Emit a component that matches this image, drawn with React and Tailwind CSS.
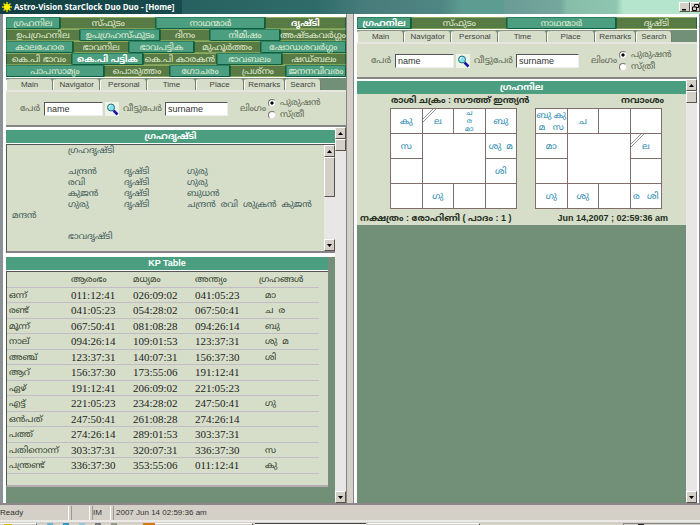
import React from 'react'

const menuRows = [
    {
        cols: 'grid-cols-[54fr_96fr_108fr_81fr]',
        items: [['ഗ്രഹനില', 1], ['സ്ഫുടം', 0], ['നാഥന്മാർ', 1], ['ദൃഷ്ടി', 0, true]],
    },
    {
        cols: 'grid-cols-[74fr_80fr_50fr_70fr_66fr]',
        items: [['ഉപഗ്രഹനില', 0], ['ഉപഗ്രഹസ്ഫുടം', 1], ['ദിനം', 0], ['നിമിഷം', 1], ['അഷ്ടകവർഗ്ഗം', 0]],
    },
    {
        cols: 'grid-cols-[67fr_56fr_64fr_67fr_85fr]',
        items: [['കാലഹോര', 1], ['ഭാവനില', 0], ['ഭാവപട്ടിക', 1], ['മുഹൂർത്തം', 0], ['ഷോഡശവർഗ്ഗം', 1]],
    },
    {
        cols: 'grid-cols-[66fr_71fr_74fr_65fr_64fr]',
        items: [['കെ.പി ഭാവം', 0], ['കെ.പി പട്ടിക', 1, true], ['കെ.പി കാരകൻ', 0], ['ഭാവബലം', 1], ['ഷഡ്ബലം', 0]],
    },
    {
        cols: 'grid-cols-[98fr_66fr_60fr_56fr_60fr]',
        items: [['പാപസാമ്യം', 1], ['പൊരുത്തം', 0], ['ഗോചരം', 1], ['പ്രശ്നം', 0], ['ജനനവിവരം', 1]],
    },
]

const rightMenuRows = [
    {
        cols: 'grid-cols-[54fr_96fr_108fr_81fr]',
        items: [['ഗ്രഹനില', 1, true], ['സ്ഫുടം', 0], ['നാഥന്മാർ', 1], ['ദൃഷ്ടി', 0]],
    },
]

const tabs = ['Main', 'Navigator', 'Personal', 'Time', 'Place', 'Remarks', 'Search']

const aspects = [
    ['ചന്ദ്രൻ', 'ദൃഷ്ടി', 'ഗുരു'],
    ['രവി', 'ദൃഷ്ടി', 'ഗുരു'],
    ['കുജൻ', 'ദൃഷ്ടി', 'ബുധൻ'],
    ['ഗുരു', 'ദൃഷ്ടി', 'ചന്ദ്രൻ  രവി  ശുക്രൻ  കുജൻ'],
]

const kpRows = [
    ['ഒന്ന്', '011:12:41', '026:09:02', '041:05:23', 'മാ'],
    ['രണ്ട്', '041:05:23', '054:28:02', '067:50:41', 'ച  ര'],
    ['മൂന്ന്', '067:50:41', '081:08:28', '094:26:14', 'ബു'],
    ['നാല്', '094:26:14', '109:01:53', '123:37:31', 'ശു  മ'],
    ['അഞ്ച്', '123:37:31', '140:07:31', '156:37:30', 'ശി'],
    ['ആറ്', '156:37:30', '173:55:06', '191:12:41', ''],
    ['ഏഴ്', '191:12:41', '206:09:02', '221:05:23', ''],
    ['എട്ട്', '221:05:23', '234:28:02', '247:50:41', 'ഗു'],
    ['ഒൻപത്', '247:50:41', '261:08:28', '274:26:14', ''],
    ['പത്ത്', '274:26:14', '289:01:53', '303:37:31', ''],
    ['പതിനൊന്ന്', '303:37:31', '320:07:31', '336:37:30', 'സ'],
    ['പന്ത്രണ്ട്', '336:37:30', '353:55:06', '011:12:41', 'കു'],
]

// houses in grid order, the centre 2x2 is left open. A leading slash marks the lagna.
const rasi = ['കു', '/ല', 'ച\nര\nമാ', 'ബു', 'സ', 'ശു  മ', '', 'ശി', '', 'ഗു', '', '']
const navamsa = ['ബു കു\nമ   സ', 'ച', '', '', 'മാ', '/ല', '', '', 'ഗു', 'ശു', '', 'ര   ശി']

const raised = 'border border-t-white border-l-white border-r-[#55524c] border-b-[#55524c] bg-[#d4d0c8]'

const Arrow = ({ down }) => (
    <svg viewBox="0 0 5 3" className="w-[5px] h-[3px]" fill="#000">
        <path d={down ? 'M0 0h5L2.5 3z' : 'M0 3h5L2.5 0z'} />
    </svg>
)

const ScrollBar = ({ thumb }) => (
    <div className="w-[11px] shrink-0 flex flex-col bg-[#e9e7e6]">
        <button aria-label="Scroll up" className={`h-3 shrink-0 flex items-center justify-center ${raised}`}><Arrow /></button>
        <div className={`${thumb} ${raised}`} />
        <button aria-label="Scroll down" className={`h-3 mt-auto shrink-0 flex items-center justify-center ${raised}`}><Arrow down /></button>
    </div>
)

const Menu = ({ rows }) => (
    <nav className="flex flex-col">
        {rows.map((row, r) => (
            <div key={r} className={`grid h-3 ${row.cols}`}>
                {row.items.map(([label, teal, active]) => (
                    <button
                        key={label}
                        className={`min-w-0 flex items-center justify-center whitespace-nowrap border text-[9px] leading-none ${teal ? 'bg-[#4b9f80] border-t-[#2a8060] border-l-[#2a8060] border-r-[#0e5f3e] border-b-[#0e5f3e]' : 'bg-[#587a44] border-t-[#8cab62] border-l-[#1c6038] border-r-[#1c6038] border-b-[#7fa055]'} ${active ? 'font-bold text-white' : 'text-[#e3eed6]'}`}
                    >
                        {label}
                    </button>
                ))}
            </div>
        ))}
    </nav>
)

const Tabs = () => (
    <div className="grid grid-cols-[47fr_47fr_47fr_48fr_48fr_41fr_36fr_25fr] h-3 mt-px bg-[#728f78]">
        {tabs.map((tab) => (
            <button key={tab} className="min-w-0 rounded-t-sm border-t border-l border-r border-t-[#8d9686] border-l-white border-r-[#77806f] bg-[#d6dec9] text-[8px] leading-[10px] text-[#444]">
                {tab}
            </button>
        ))}
    </div>
)

const SearchIcon = () => (
    <svg viewBox="0 0 14 14" className="w-3.5 h-3.5">
        <path d="M8.5 8.5l4 4" stroke="#1414a0" strokeWidth="2.5" />
        <circle cx="6" cy="5.5" r="3.5" fill="#7fe3ee" stroke="#28707c" strokeWidth="1" />
        <path d="M4 5.5a2 2 0 0 1 2-2" stroke="#fff" fill="none" />
    </svg>
)

const PersonForm = ({ side }) => {
    const field = 'h-3.5 min-w-0 bg-white border border-t-[#555] border-l-[#555] border-r-[#eee] border-b-[#eee] pl-0.5 text-[9px] text-[#333]'
    return (
        <form className="h-[37px] flex items-center pl-3.5 border-t-2 border-t-[#e6e6de] border-b-2 border-b-[#858585] bg-[#d6dec9] text-[9px] text-[#5c6653] whitespace-nowrap">
            <label htmlFor={`${side}-name`} className="w-6">പേർ</label>
            <input id={`${side}-name`} defaultValue="name" className={`${field} w-[59px]`} />
            <button type="button" aria-label="Search" className="ml-0.5 w-3.5 h-3.5 bg-[#eef3ea]"><SearchIcon /></button>
            <label htmlFor={`${side}-surname`} className="ml-1 w-[42px]">വീട്ടുപേർ</label>
            <input id={`${side}-surname`} defaultValue="surname" className={`${field} w-[63px]`} />
            <fieldset className="ml-3 flex items-center">
                <span className="w-[28px]">ലിംഗം</span>
                <div className="flex flex-col gap-px">
                    {['പുരുഷൻ', 'സ്ത്രീ'].map((label, i) => (
                        <label key={label} className="h-[11px] flex items-center gap-1">
                            <input
                                type="radio"
                                name={`${side}-gender`}
                                defaultChecked={i === 0}
                                className="appearance-none w-2 h-2 rounded-full border border-[#777] border-b-[#ddd] border-r-[#ddd] bg-white checked:bg-[radial-gradient(#000_35%,#fff_40%)]"
                            />
                            {label}
                        </label>
                    ))}
                </div>
            </fieldset>
        </form>
    )
}

const PanelTitle = ({ children }) => (
    <h2 className="h-[13px] flex items-center justify-center bg-[#4b9f80] text-white text-[9px] leading-none font-bold">{children}</h2>
)

const House = ({ value }) => {
    const lagna = value.startsWith('/')
    const text = lagna ? value.slice(1) : value
    const lines = text.split('\n').length
    return (
        <div className={`relative min-w-0 bg-white flex items-center justify-center text-center whitespace-pre text-[#2589ae] ${lines === 3 ? 'text-[7px] leading-[8px]' : 'text-[9px] leading-3'}`}>
            {lagna && (
                <svg viewBox="0 0 14 14" className="absolute top-0 left-0 w-3.5 h-3.5" stroke="#777" strokeWidth="0.8">
                    <path d="M0 10L10 0M0 13L13 0" />
                </svg>
            )}
            {text}
        </div>
    )
}

const Chart = ({ houses }) => (
    <div className="w-[127px] h-[101px] grid grid-cols-4 grid-rows-4 gap-px p-px bg-[#806d6c]">
        {houses.slice(0, 5).map((v, i) => <House key={i} value={v} />)}
        <div className="col-span-2 row-span-2 bg-white" />
        {houses.slice(5).map((v, i) => <House key={i} value={v} />)}
    </div>
)

const App = () => {
    return (
        <div className="min-h-screen flex flex-col bg-[#d4d0c8] font-['Liberation_Sans','Noto_Sans_Malayalam',sans-serif]">
            <header className="h-[14px] flex items-center gap-0.5 pl-0.5 bg-[linear-gradient(90deg,#123f42_0%,#174b4d_26%,#27605f_26%,#2f6c69_45%,#477c7b_52%,#4f8582_63%,#5d9c90_66%,#5d9c90_72%,#6a9c96_72%,#75a79c_80%,#85bda8_81%,#8fc6b1_88%,#b5e6cd_89%)]">
                <svg viewBox="0 0 10 10" className="w-2.5 h-2.5">
                    <path d="M5 0v10M0 5h10M1.5 1.5l7 7M8.5 1.5l-7 7" stroke="#e8d800" strokeWidth="1.4" />
                    <circle cx="5" cy="5" r="3" fill="#fff200" />
                </svg>
                <h1 className="text-white font-bold text-[8px] leading-none font-['Open_Sans',sans-serif]">Astro-Vision StarClock Duo Duo - [Home]</h1>
                <button aria-label="Minimize" className={`ml-auto w-[11px] h-2.5 flex items-center justify-center ${raised}`}>
                    <svg viewBox="0 0 7 7" className="w-[7px] h-[7px]"><path d="M1 5h4v1.5H1z" /></svg>
                </button>
                <button aria-label="Restore" className={`-ml-0.5 w-2.5 h-2.5 flex items-center justify-center ${raised}`}>
                    <svg viewBox="0 0 7 7" className="w-[7px] h-[7px]" fill="none" stroke="#000">
                        <path d="M2.5 2.5v-2h4v3h-2M.5 3h4v3.5h-4z" />
                    </svg>
                </button>
            </header>

            <main className="flex-1 grid grid-cols-2 gap-1.5">
                <section className="min-w-0 flex flex-col border-l-3 border-l-[#8a9296] pl-[3px] pt-[3px] bg-white border-r border-r-[#85858a]">
                    <Menu rows={menuRows} />
                    <Tabs />
                    <PersonForm side="left" />
                    <div className="flex-1 flex">
                        <div className="flex-1 min-w-0 flex flex-col bg-[#728f78]">
                            <div className="bg-white pt-[3px] pb-1">
                                <PanelTitle>ഗ്രഹദൃഷ്ടി</PanelTitle>
                                <div className="mt-px h-[109px] flex border-t border-l border-[#555] border-b-2 border-b-[#8a828a] bg-[#d6dec9]">
                                    <div className="flex-1 pl-[5px] text-[9px] leading-[11px] text-[#3d5a5a] whitespace-pre">
                                        <p className="pl-14 mb-2.5">ഗ്രഹദൃഷ്ടി</p>
                                        {aspects.map((row) => (
                                            <div key={row[0]} className="grid grid-cols-[56px_63px_1fr] pl-14">
                                                {row.map((cell, i) => <span key={i}>{cell}</span>)}
                                            </div>
                                        ))}
                                        <p>മന്ദൻ</p>
                                        <p className="pl-14 mt-2.5">ഭാവദൃഷ്ടി</p>
                                    </div>
                                    <ScrollBar thumb="h-10" />
                                </div>
                            </div>
                            <div className="mr-1.5 border-r border-r-[#8a828a] bg-white">
                                <PanelTitle>KP Table</PanelTitle>
                                <div className="mt-px h-[216px] pr-[9px] border-t border-l border-[#555] border-b-2 border-b-[#b5aab2] bg-[#d6dec9]">
                                    <table className="w-full table-fixed border-collapse text-left text-[9px] text-[#33402e]">
                                        <thead>
                                            <tr className="h-[15px] border-b border-[#c3bcc6]">
                                                <td className="w-[64px]"></td>
                                                <th className="w-[62px] font-normal">ആരംഭം</th>
                                                <th className="w-[62px] font-normal">മധ്യമം</th>
                                                <th className="w-[64px] font-normal">അന്ത്യം</th>
                                                <th className="font-normal">ഗ്രഹങ്ങൾ</th>
                                            </tr>
                                        </thead>
                                        <tbody>
                                            {kpRows.map((row) => (
                                                <tr key={row[0]} className="h-[15px] even:h-4 border-b border-[#c3bcc6] whitespace-pre leading-[14px]">
                                                    <th className="pl-0.5 font-normal">{row[0]}</th>
                                                    {row.slice(1, 4).map((v) => (
                                                        <td key={v} className="font-['Liberation_Serif',serif] text-[11px] text-[#222]">{v}</td>
                                                    ))}
                                                    <td className="pl-1.5">{row[4]}</td>
                                                </tr>
                                            ))}
                                        </tbody>
                                    </table>
                                </div>
                            </div>
                        </div>
                        <ScrollBar thumb="h-3" />
                    </div>
                </section>

                <section className="min-w-0 flex flex-col border-l border-l-[#85858a] pl-[3px] pt-[3px] pr-0.5 bg-white border-r border-r-[#85858a]">
                    <Menu rows={rightMenuRows} />
                    <Tabs />
                    <PersonForm side="right" />
                    <div className="flex-1 flex">
                        <div className="flex-1 min-w-0 bg-[#728f78]">
                            <div className="bg-white pt-0.5">
                                <PanelTitle>ഗ്രഹനില</PanelTitle>
                            </div>
                            <div className="bg-[#d6dec9] text-[9px] text-[#26301f] font-bold whitespace-pre">
                                <div className="flex justify-between pl-[34px] pr-[22px] h-3.5 items-center">
                                    <span>രാശി ചക്രം : സൗത്ത് ഇന്ത്യൻ</span>
                                    <span>നവാംശം</span>
                                </div>
                                <div className="flex gap-[18px] pl-[33px] font-normal">
                                    <Chart houses={rasi} />
                                    <Chart houses={navamsa} />
                                </div>
                                <div className="flex justify-between pl-[3px] pr-[18px] pt-1 h-4 items-center">
                                    <span>നക്ഷത്രം : രോഹിണി ( പാദം : 1 )</span>
                                    <span>Jun 14,2007 ; 02:59:36 am</span>
                                </div>
                            </div>
                        </div>
                        <ScrollBar thumb="h-3" />
                    </div>
                </section>
            </main>

            <footer>
                <div className="h-[17px] flex items-stretch gap-0.5 border-t-2 border-t-[#8f868c] pt-px text-[8px] leading-[14px] text-[#333]">
                    <span className="w-[69px] border-r border-r-white">Ready</span>
                    <span className="w-[19px] border-l border-l-[#999] border-r border-r-white" />
                    <span className="w-[19px] border-l border-l-[#999] border-r border-r-white">IM</span>
                    <span className="flex-1 border-l border-l-[#999] pl-0.5">2007 Jun 14 02:59:36 am</span>
                </div>
                <div className="h-[5px] flex items-end border-t-2 border-t-[#eceae8]">
                    <div className="w-[37px] h-0.5 border-t border-t-white border-r border-r-[#555] flex pl-1"><span className="w-2 h-px bg-[#d9a520]" /></div>
                    <div className="flex gap-2.5 px-2.5">
                        <span className="w-1.5 h-0.5 bg-[#6fb0cf]" />
                        <span className="w-1.5 h-0.5 bg-[#2f98c8]" />
                        <span className="w-1.5 h-0.5 bg-[#8ec6d8]" />
                        <span className="w-1.5 h-0.5 bg-[#77777a]" />
                        <span className="w-1.5 h-0.5 bg-[#96968c]" />
                    </div>
                    <div className="ml-4 w-[110px] h-0.5 border-t border-t-white border-r border-r-[#555] flex"><span className="w-3 h-0.5 -mt-px bg-[#d9761c]" /></div>
                    <div className="ml-0.5 w-[111px] h-0.5 border-t border-[#444] bg-white" />
                    <div className="ml-0.5 w-[112px] h-0.5 border-t border-t-white border-r border-r-[#555]" />
                    <div className="ml-auto w-[77px] h-0.5 border-t border-l border-[#888] flex pl-3.5"><span className="w-1.5 h-px bg-[#222]" /></div>
                </div>
            </footer>
        </div>
    )
}

export default App
